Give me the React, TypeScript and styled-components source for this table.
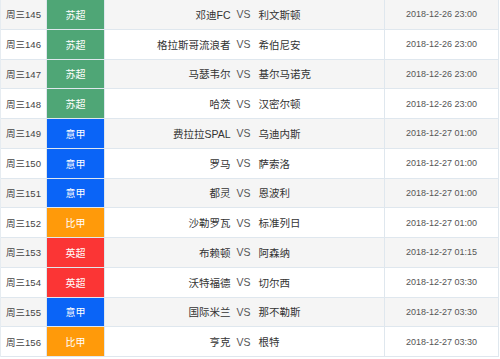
import React from 'react';
import styled, { createGlobalStyle } from 'styled-components';

const GlobalStyle = createGlobalStyle`
    body {
        margin: 0;
        background: #fff;
        font-family: "Liberation Sans", "Noto Sans CJK SC", sans-serif;
    }
`;

type League = '苏超' | '意甲' | '比甲' | '英超';

const leagueColors: Record<League, string> = {
    '苏超': '#4fa676',
    '意甲': '#0a64f7',
    '比甲': '#ff9a0a',
    '英超': '#fb3535',
};

const matches: { no: number; league: League; home: string; away: string; time: string }[] = [
    { no: 145, league: '苏超', home: '邓迪FC', away: '利文斯顿', time: '2018-12-26 23:00' },
    { no: 146, league: '苏超', home: '格拉斯哥流浪者', away: '希伯尼安', time: '2018-12-26 23:00' },
    { no: 147, league: '苏超', home: '马瑟韦尔', away: '基尔马诺克', time: '2018-12-26 23:00' },
    { no: 148, league: '苏超', home: '哈茨', away: '汉密尔顿', time: '2018-12-26 23:00' },
    { no: 149, league: '意甲', home: '费拉拉SPAL', away: '乌迪内斯', time: '2018-12-27 01:00' },
    { no: 150, league: '意甲', home: '罗马', away: '萨索洛', time: '2018-12-27 01:00' },
    { no: 151, league: '意甲', home: '都灵', away: '恩波利', time: '2018-12-27 01:00' },
    { no: 152, league: '比甲', home: '沙勒罗瓦', away: '标准列日', time: '2018-12-27 01:00' },
    { no: 153, league: '英超', home: '布赖顿', away: '阿森纳', time: '2018-12-27 01:15' },
    { no: 154, league: '英超', home: '沃特福德', away: '切尔西', time: '2018-12-27 03:30' },
    { no: 155, league: '意甲', home: '国际米兰', away: '那不勒斯', time: '2018-12-27 03:30' },
    { no: 156, league: '比甲', home: '亨克', away: '根特', time: '2018-12-27 03:30' },
];

const Table = styled.div`
    width: 498px;
    border-left: 1px solid #e6ecf1;
`;

const Row = styled.div<{ $striped: boolean }>`
    display: grid;
    grid-template-columns: 46px 58px 280px 1fr;
    height: 29.75px;
    box-sizing: border-box;
    border-bottom: 1px solid #dfe7ee;
    background: ${props => props.$striped ? '#f5f5f5' : '#fff'};
`;

const Cell = styled.div`
    display: flex;
    align-items: center;
    justify-content: center;
    border-right: 1px solid #dfe7ee;
    overflow: hidden;
    white-space: nowrap;
`;

const NoCell = styled(Cell)`
    font-size: 9.5px;
    color: #444;
`;

const Badge = styled(Cell)<{ $color: string }>`
    background: ${props => props.$color};
    color: #fff;
    font-size: 10px;
`;

const MatchCell = styled(Cell)`
    font-size: 10.5px;
    color: #333;
`;

const Home = styled.span`
    flex: 1;
    text-align: right;
`;

const Versus = styled.span`
    margin: 0 8px 0 6px;
    color: #555;
`;

const Away = styled.span`
    flex: 1;
    text-align: left;
`;

const TimeCell = styled(Cell)`
    font-size: 9px;
    color: #555;
`;

const App: React.FC = () => {
    return (
        <>
            <GlobalStyle />
            <Table>
                {matches.map((m, i) => (
                    <Row key={m.no} $striped={i % 2 === 0}>
                        <NoCell>周三{m.no}</NoCell>
                        <Badge $color={leagueColors[m.league]}>{m.league}</Badge>
                        <MatchCell>
                            <Home>{m.home}</Home>
                            <Versus>VS</Versus>
                            <Away>{m.away}</Away>
                        </MatchCell>
                        <TimeCell>{m.time}</TimeCell>
                    </Row>
                ))}
            </Table>
        </>
    );
};

export default App;
